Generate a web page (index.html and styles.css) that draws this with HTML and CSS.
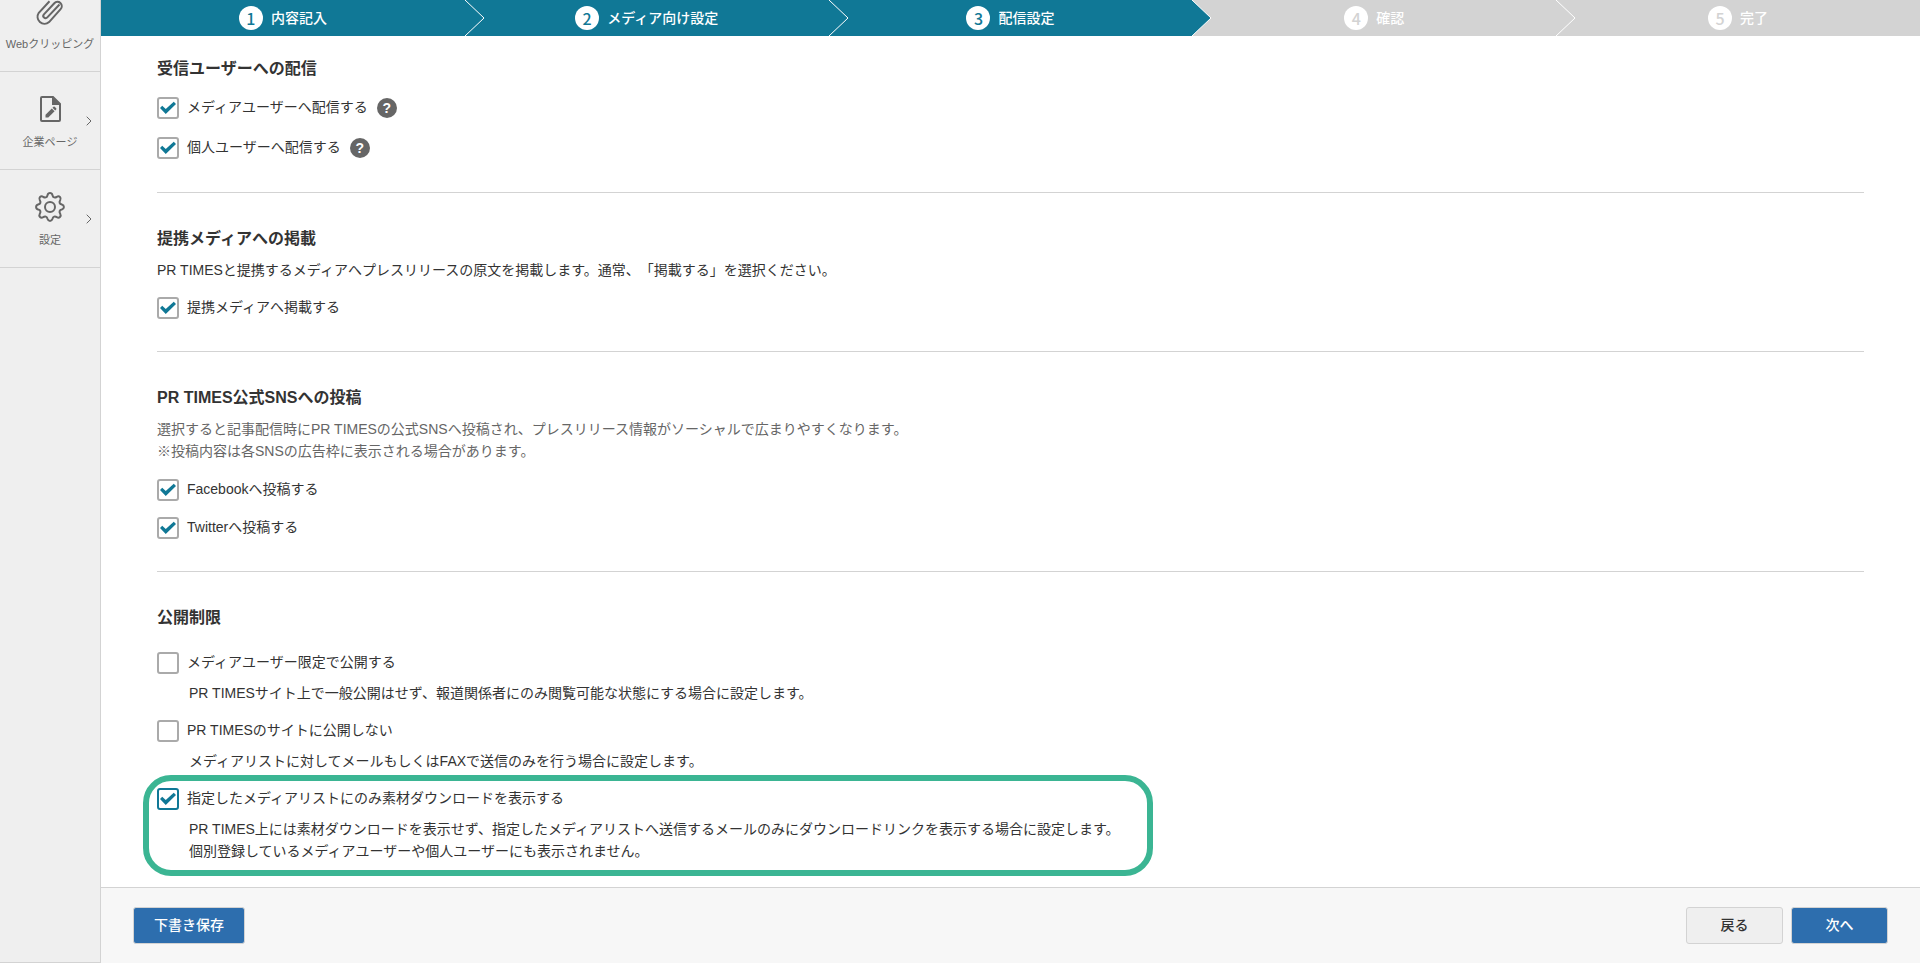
FILE: index.html
```html
<!DOCTYPE html>
<html lang="ja">
<head>
<meta charset="utf-8">
<meta name="viewport" content="width=device-width, initial-scale=1">
<title>配信設定 | PR TIMES</title>
<link rel="stylesheet" href="styles.css">
</head>
<body>
<div class="app">
  <nav class="sidebar" aria-label="メインメニュー">
    <ul class="menu">
      <li class="menu-item">
        <a class="menu-link" href="#clipping">
          <svg class="menu-icon" viewBox="0 0 30 30" aria-hidden="true"><path d="M25.500 6.500 L13.300 19.400 a2.300 2.300 0 0 1 -3.400 -3.100 L20.300 5.200 a4.300 4.300 0 0 1 6.300 5.900 L15.100 24.100 a7 7 0 0 1 -10.300 -9.300 L15.500 3.300" transform="translate(-1 2)"/></svg>
          <span>Webクリッピング</span>
        </a>
      </li>
      <li class="menu-item">
        <a class="menu-link" href="#company">
          <svg class="menu-icon" viewBox="0 0 30 30" aria-hidden="true"><path d="M7 3h11l7 7v16a1 1 0 0 1-1 1H7a1 1 0 0 1-1-1V4a1 1 0 0 1 1-1z"/><path class="solid" d="M17 2.500l8.500 8.500H17zM10.500 23.500v-2.800l6.300-6.300 2.800 2.800-6.300 6.300zM17.500 13.700l1-1q.6-.5 1.200 0l1.500 1.500q.5.600 0 1.200l-1 1z"/></svg>
          <span>企業ページ</span>
          <svg class="chevron" viewBox="0 0 6 10" aria-hidden="true"><path d="M.7.7L5 5 .7 9.300"/></svg>
        </a>
      </li>
      <li class="menu-item">
        <a class="menu-link" href="#settings">
          <svg class="menu-icon" viewBox="0 0 30 30" aria-hidden="true"><circle cx="15" cy="15" r="5"/><path d="M12.500 3.200C13.300.4 16.700.4 17.500 3.200 18 5.600 20 6 21.800 4.800 24.300 3.400 26.600 5.700 25.200 8.200 24 10 24.400 12 26.800 12.500 29.600 13.300 29.600 16.700 26.800 17.500 24.400 18 24 20 25.200 21.800 26.600 24.300 24.300 26.600 21.800 25.200 20 24 18 24.400 17.500 26.800 16.700 29.600 13.300 29.600 12.500 26.800 12 24.400 10 24 8.200 25.200 5.700 26.600 3.400 24.300 4.800 21.800 6 20 5.600 18 3.200 17.500.4 16.700.4 13.300 3.200 12.500 5.600 12 6 10 4.800 8.200 3.400 5.700 5.700 3.400 8.200 4.800 10 6 12 5.600 12.500 3.200z"/></svg>
          <span>設定</span>
          <svg class="chevron" viewBox="0 0 6 10" aria-hidden="true"><path d="M.7.7L5 5 .7 9.300"/></svg>
        </a>
      </li>
    </ul>
  </nav>

  <div class="page">
    <ol class="steps">
      <li class="step done"><span class="num">1</span>内容記入<svg class="tip" viewBox="0 0 20 36" aria-hidden="true"><path d="M0 0L19 18 0 36"/></svg></li>
      <li class="step done"><span class="num">2</span>メディア向け設定<svg class="tip" viewBox="0 0 20 36" aria-hidden="true"><path d="M0 0L19 18 0 36"/></svg></li>
      <li class="step done" aria-current="step"><span class="num">3</span>配信設定<svg class="tip" viewBox="0 0 20 36" aria-hidden="true"><path d="M0 0L19 18 0 36"/></svg></li>
      <li class="step"><span class="num">4</span>確認<svg class="tip" viewBox="0 0 20 36" aria-hidden="true"><path d="M0 0L19 18 0 36"/></svg></li>
      <li class="step"><span class="num">5</span>完了</li>
    </ol>

    <main class="content">
      <section class="section">
        <h2 class="title">受信ユーザーへの配信</h2>
        <div class="checks roomy">
          <div class="check-row">
            <label class="check"><input type="checkbox" checked>メディアユーザーへ配信する</label>
            <button class="help" type="button" aria-label="ヘルプ">?</button>
          </div>
          <div class="check-row">
            <label class="check"><input type="checkbox" checked>個人ユーザーへ配信する</label>
            <button class="help" type="button" aria-label="ヘルプ">?</button>
          </div>
        </div>
      </section>

      <section class="section">
        <h2 class="title">提携メディアへの掲載</h2>
        <p class="lead">PR TIMESと提携するメディアへプレスリリースの原文を掲載します。通常、「掲載する」を選択ください。</p>
        <div class="checks">
          <label class="check"><input type="checkbox" checked>提携メディアへ掲載する</label>
        </div>
      </section>

      <section class="section">
        <h2 class="title">PR TIMES公式SNSへの投稿</h2>
        <p class="lead muted">選択すると記事配信時にPR TIMESの公式SNSへ投稿され、プレスリリース情報がソーシャルで広まりやすくなります。<br>※投稿内容は各SNSの広告枠に表示される場合があります。</p>
        <div class="checks">
          <label class="check"><input type="checkbox" checked>Facebookへ投稿する</label>
          <label class="check"><input type="checkbox" checked>Twitterへ投稿する</label>
        </div>
      </section>

      <section class="section">
        <h2 class="title">公開制限</h2>
        <div class="options">
          <div class="option">
            <label class="check"><input type="checkbox" aria-describedby="d1">メディアユーザー限定で公開する</label>
            <p class="desc" id="d1">PR TIMESサイト上で一般公開はせず、報道関係者にのみ閲覧可能な状態にする場合に設定します。</p>
          </div>
          <div class="option">
            <label class="check"><input type="checkbox" aria-describedby="d2">PR TIMESのサイトに公開しない</label>
            <p class="desc" id="d2">メディアリストに対してメールもしくはFAXで送信のみを行う場合に設定します。</p>
          </div>
          <div class="option highlight">
            <label class="check active"><input type="checkbox" checked aria-describedby="d3">指定したメディアリストにのみ素材ダウンロードを表示する</label>
            <p class="desc" id="d3">PR TIMES上には素材ダウンロードを表示せず、指定したメディアリストへ送信するメールのみにダウンロードリンクを表示する場合に設定します。<br>個別登録しているメディアユーザーや個人ユーザーにも表示されません。</p>
          </div>
        </div>
      </section>
    </main>

    <footer class="actions">
      <button class="btn primary save" type="button">下書き保存</button>
      <button class="btn" type="button">戻る</button>
      <button class="btn primary" type="button">次へ</button>
    </footer>
  </div>
</div>
</body>
</html>
```

FILE: styles.css
```css
* {
  box-sizing: border-box;
}

body {
  margin: 0;
  background: #fff;
  color: #333;
  font-family: "Liberation Sans", "Noto Sans CJK JP", sans-serif;
  font-size: 14px;
  line-height: 22px;
  text-spacing-trim: space-all;
}

h2, p, ul, ol {
  margin: 0;
  padding: 0;
}

ul, ol {
  list-style: none;
}

button {
  font: inherit;
  cursor: pointer;
}

.app {
  display: flex;
  min-height: 100vh;
}

/* Sidebar */
.sidebar {
  flex: none;
  width: 101px;
  overflow: hidden;
  background: #efefef;
  border-right: 1px solid #d3d3d3;
  border-bottom: 1px solid #d3d3d3;
}

.menu {
  margin-top: -26px;
}

.menu-item {
  border-bottom: 1px solid #d3d3d3;
}

.menu-link {
  position: relative;
  display: flex;
  flex-direction: column;
  align-items: center;
  gap: 10px;
  padding: 22px 0 19px;
  color: #666;
  font-size: 11px;
  line-height: 16px;
  white-space: nowrap;
  text-decoration: none;
}

.menu-icon {
  width: 30px;
  height: 30px;
  fill: none;
  stroke: #666;
  stroke-width: 2;
}

.menu-icon .solid {
  fill: #666;
  stroke: none;
}

.chevron {
  position: absolute;
  top: 44px;
  right: 8px;
  width: 6px;
  height: 10px;
  fill: none;
  stroke: #666;
}

/* Steps */
.page {
  display: flex;
  flex: 1;
  flex-direction: column;
  min-width: 0;
}

.steps {
  display: grid;
  grid-template-columns: repeat(5, 1fr);
}

.step {
  position: relative;
  display: flex;
  align-items: center;
  justify-content: center;
  gap: 8px;
  height: 36px;
  background: #d3d3d3;
  color: #fff;
  font-weight: 500;
}

.num {
  width: 24px;
  height: 24px;
  border-radius: 50%;
  background: #fff;
  color: #d3d3d3;
  font-family: "Noto Sans CJK JP", sans-serif;
  font-size: 16px;
  line-height: 24px;
  text-align: center;
}

.tip {
  position: absolute;
  z-index: 1;
  top: 0;
  left: 100%;
  width: 20px;
  height: 36px;
  fill: #d3d3d3;
  stroke: #fff;
}

.done {
  background: #107896;
}

.done .num {
  color: #107896;
}

.done .tip {
  fill: #107896;
}

/* Form */
.content {
  flex: 1;
  padding: 0 56px;
}

.section {
  padding: 34px 0 32px;
  border-bottom: 1px solid #d3d3d3;
}

.section:first-child {
  padding: 21px 0 33px;
}

.section:last-child {
  padding-bottom: 11px;
  border-bottom: 0;
}

.title {
  font-size: 16px;
  font-weight: 700;
  line-height: 24px;
}

.lead {
  margin-top: 8px;
}

.muted {
  color: #666;
}

.checks {
  display: flex;
  flex-direction: column;
  align-items: flex-start;
  gap: 16px;
  margin-top: 16px;
}

.roomy {
  gap: 18px;
}

.muted + .checks {
  margin-top: 17px;
}

.check-row {
  display: flex;
  align-items: center;
  gap: 9px;
}

.check {
  display: flex;
  align-items: flex-start;
  gap: 8px;
  line-height: 20px;
}

.check input {
  display: grid;
  flex: none;
  place-items: center;
  width: 22px;
  height: 22px;
  margin: 0;
  border: 2px solid #aaa;
  border-radius: 3px;
  background: #fff;
  appearance: none;
}

.check input:checked::before {
  content: "";
  width: 16px;
  height: 14px;
  background: #107896;
  clip-path: polygon(0 50%, 14% 34%, 36% 57%, 86% 6%, 100% 22%, 36% 92%);
}

.check.active input {
  border-color: #107896;
}

.help {
  width: 20px;
  height: 20px;
  padding: 0;
  border: 0;
  border-radius: 50%;
  background: #666;
  color: #fff;
  font-size: 14px;
  font-weight: 700;
  line-height: 20px;
}

.options {
  display: flex;
  flex-direction: column;
  align-items: flex-start;
  margin-top: 22px;
}

.option + .option {
  margin-top: 16px;
}

.desc {
  margin-top: 8px;
  padding-left: 32px;
}

.option + .highlight {
  margin: 3px 0 0 -14px;
  padding: 7px 27px 8px 8px;
  border: 6px solid #3bb593;
  border-radius: 28px;
}

/* Footer */
.actions {
  display: flex;
  gap: 8px;
  padding: 19px 32px;
  background: #f7f7f7;
  border-top: 1px solid #d3d3d3;
}

.btn {
  min-width: 97px;
  height: 37px;
  padding: 0 20px 2px;
  border: 1px solid #d3d3d3;
  border-radius: 3px;
  background: #efefef;
  color: #333;
  font-weight: 500;
}

.primary {
  background: #2d6eae;
  color: #fff;
}

.save {
  margin-right: auto;
}
```
